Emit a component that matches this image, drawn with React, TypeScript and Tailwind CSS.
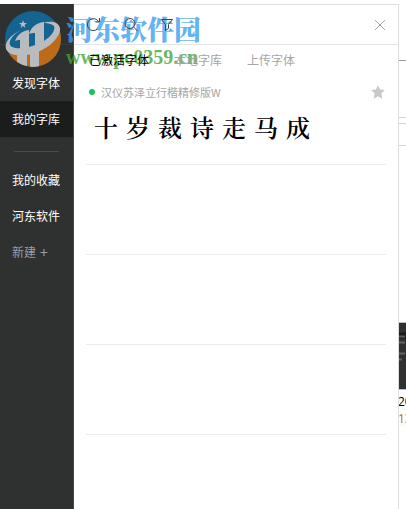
const menuItems = [
  { label: "发现字体", className: "text-white" },
  { label: "我的字库", className: "bg-[#1b1d1c] text-white" },
];

const collections = ["我的收藏", "河东软件"];

const tabs = [
  { label: "已激活字体", active: true },
  { label: "本地字库", active: false },
  { label: "上传字体", active: false },
];

const sample = "十岁裁诗走马成";

const Logo = () => (
  <svg className="h-[58px] w-[58px] shrink-0" viewBox="0 0 58 58" aria-hidden="true">
    <defs>
      <clipPath id="disc">
        <circle cx="29" cy="29" r="28" />
      </clipPath>
    </defs>
    <g clipPath="url(#disc)">
      <rect width="58" height="58" fill="#136491" />
      <path d="M0 42C20 45 44 37 58 18V58H0Z" fill="#bd6b18" />
      <path d="M13 43H23V58H13ZM26 43L35 40V58H26Z" fill="#b9bcbe" />
      <path d="M11 31C13 26 17 21 25 20V40H16V30C14 30 13 30 11 31Z" fill="#b9bcbe" />
      <path d="M25 24C27 18 31 13 40 12V37L31 39V23C28 23 27 23 25 24Z" fill="#b9bcbe" />
    </g>
    <path
      d="M17 20C7 25 0 32 2 39C6 48 25 47 38 40C50 34 57 24 56 18C54 11 46 11 39 13C47 13 52 15 50 20C47 29 33 36 20 38C10 39 4 37 6 31C8 26 12 23 17 20Z"
      fill="#b9bcbe"
    />
    <path d="M19 10L20 13H23L20.500 15L21.500 18L19 16L16.500 18L17.500 15L15 13H18Z" fill="#b9bcbe" />
  </svg>
);

// Marca de agua del sitio, entre el fondo y el contenido del panel
const Watermark = () => (
  <div className="pointer-events-none absolute left-1 top-[10px] z-10 flex gap-1">
    <Logo />
    <div className="flex flex-col whitespace-nowrap font-bold">
      <span className="font-['Noto_Serif_CJK_SC','Noto_Sans_CJK_SC',sans-serif] text-[27px] font-black leading-[38px] text-[#3a9eee]/80">
        河东软件园
      </span>
      <span className="font-['Liberation_Serif',serif] text-[20px] leading-[18px] text-[#3fa535]/80">
        www.pc0359.cn
      </span>
    </div>
  </div>
);

const Sidebar = () => (
  <nav className="w-[74px] shrink-0 border-r border-[#454747] bg-[#2f3130] text-xs">
    <div className="mb-5 h-[41px] border-b border-[#3a3c3b]" />
    {menuItems.map((item) => (
      <a key={item.label} href="#" className={`flex h-9 items-center pl-3 ${item.className}`}>
        {item.label}
      </a>
    ))}
    <hr className="mx-[14px] mb-[10px] mt-[14px] border-t border-[#494b4f]" />
    {collections.map((label) => (
      <a key={label} href="#" className="flex h-9 items-center pl-3 text-white">
        {label}
      </a>
    ))}
    <button type="button" className="flex h-9 items-center gap-1 pl-3 text-[#969eab]">
      <span>新建</span>
      <span className="text-sm">+</span>
    </button>
  </nav>
);

const Toolbar = () => (
  <header className="flex h-10 items-center border-b border-[#e5e5e5] px-3 text-[#444444]">
    <button type="button" aria-label="刷新">
      <svg className="h-4 w-4" viewBox="0 0 16 16" fill="none" stroke="currentColor">
        <path d="M11.500 12A6 6 0 1 1 12.500 4.500M13.500 1V5H9.500" />
      </svg>
    </button>
    <span className="ml-2 h-3 w-px bg-[#e5e5e5]/50" />
    <button type="button" aria-label="搜索" className="ml-3">
      <svg className="h-4 w-4" viewBox="0 0 16 16" fill="none" stroke="currentColor">
        <circle cx="7" cy="6.500" r="5" />
        <path d="M10.500 10L14.500 14" />
      </svg>
    </button>
    <button type="button" aria-label="筛选" className="ml-5">
      <svg className="h-4 w-4" viewBox="0 0 16 16" fill="none" stroke="currentColor">
        <path d="M2.500 2.500H13.500L9.500 7.500V11.500L6.500 13.500V7.500Z" />
      </svg>
    </button>
    <button type="button" aria-label="关闭" className="ml-auto text-[#a5a5a5]">
      <svg className="h-3 w-3" viewBox="0 0 12 12" fill="none" stroke="currentColor">
        <path d="M1 1L11 11M11 1L1 11" />
      </svg>
    </button>
  </header>
);

const FontCard = () => (
  <article className="h-[90px] border-b border-[#ebebeb]">
    <div className="flex h-[34px] items-center pl-[3px] text-[11px] text-[#a5a5a5]">
      <span className="mr-[6px] h-[6px] w-[6px] rounded-full bg-[#16c45b]" />
      <h2>汉仪苏泽立行楷精修版W</h2>
      <button type="button" aria-label="收藏" className="ml-auto text-[#c8c8c8]">
        <svg className="h-4 w-4" viewBox="0 0 14 14" fill="currentColor">
          <path d="M7 1L8.800 4.800L13 5.300L10 8.200L10.700 13L7 10.800L3.300 13L4 8.200L1 5.300L5.200 4.800Z" />
        </svg>
      </button>
    </div>
    <p className="flex gap-2 pl-2 font-['KaiTi','STKaiti','Noto_Serif_CJK_SC','Noto_Sans_CJK_SC',sans-serif] text-2xl font-semibold leading-9 text-black">
      {Array.from(sample).map((char) => (
        <span key={char}>{char}</span>
      ))}
    </p>
  </article>
);

// Borde de la ventana que queda detrás del panel
const BackWindow = () => (
  <aside className="w-[7px] shrink-0 overflow-hidden text-xs text-black">
    <div className="h-[57px] border-b border-[#999999]" />
    <div className="h-[57px] border-b border-[#d5d5d5]" />
    <div className="h-[6px] border-b border-[#d5d5d5]" />
    <div className="h-[22px] border-b border-[#d5d5d5]" />
    <div className="mt-[176px] h-[68px] border-b border-t border-[#bcbcbc] bg-[#2f3130]">
      <svg className="h-10 w-[7px]" viewBox="0 0 7 40" stroke="#777777">
        <path d="M0 12.500H7" stroke="#191b1a" strokeWidth="6" />
        <path d="M0 13.500H6M0 19.500H6M0 30.500H6M0 36.500H3" strokeWidth="2" strokeOpacity="0.7" />
      </svg>
    </div>
    <p className="-ml-px mt-[3px] font-['Open_Sans','Noto_Sans_CJK_SC',sans-serif] leading-[17px]">
      20
      <br />
      <span className="text-[#b96d12]">13</span>
    </p>
  </aside>
);

const App = () => {
  return (
    <div className="relative flex min-h-screen bg-white pt-1 font-['Noto_Sans_CJK_SC',sans-serif]">
      <Sidebar />
      <Watermark />
      <main className="relative z-20 min-w-0 flex-1 border-r border-t border-[#dedede]">
        <Toolbar />
        <div role="tablist" className="flex h-[30px] items-center gap-[25px] pl-[15px] text-xs">
          {tabs.map((tab) => (
            <button
              key={tab.label}
              type="button"
              role="tab"
              aria-selected={tab.active}
              className={tab.active ? "text-black" : "text-[#a5a5a5]"}
            >
              {tab.label}
            </button>
          ))}
        </div>
        <section className="px-3">
          <FontCard />
          <div className="h-[90px] border-b border-[#ebebeb]" />
          <div className="h-[90px] border-b border-[#ebebeb]" />
          <div className="h-[90px] border-b border-[#ebebeb]" />
        </section>
      </main>
      <BackWindow />
    </div>
  );
};

export default App;
